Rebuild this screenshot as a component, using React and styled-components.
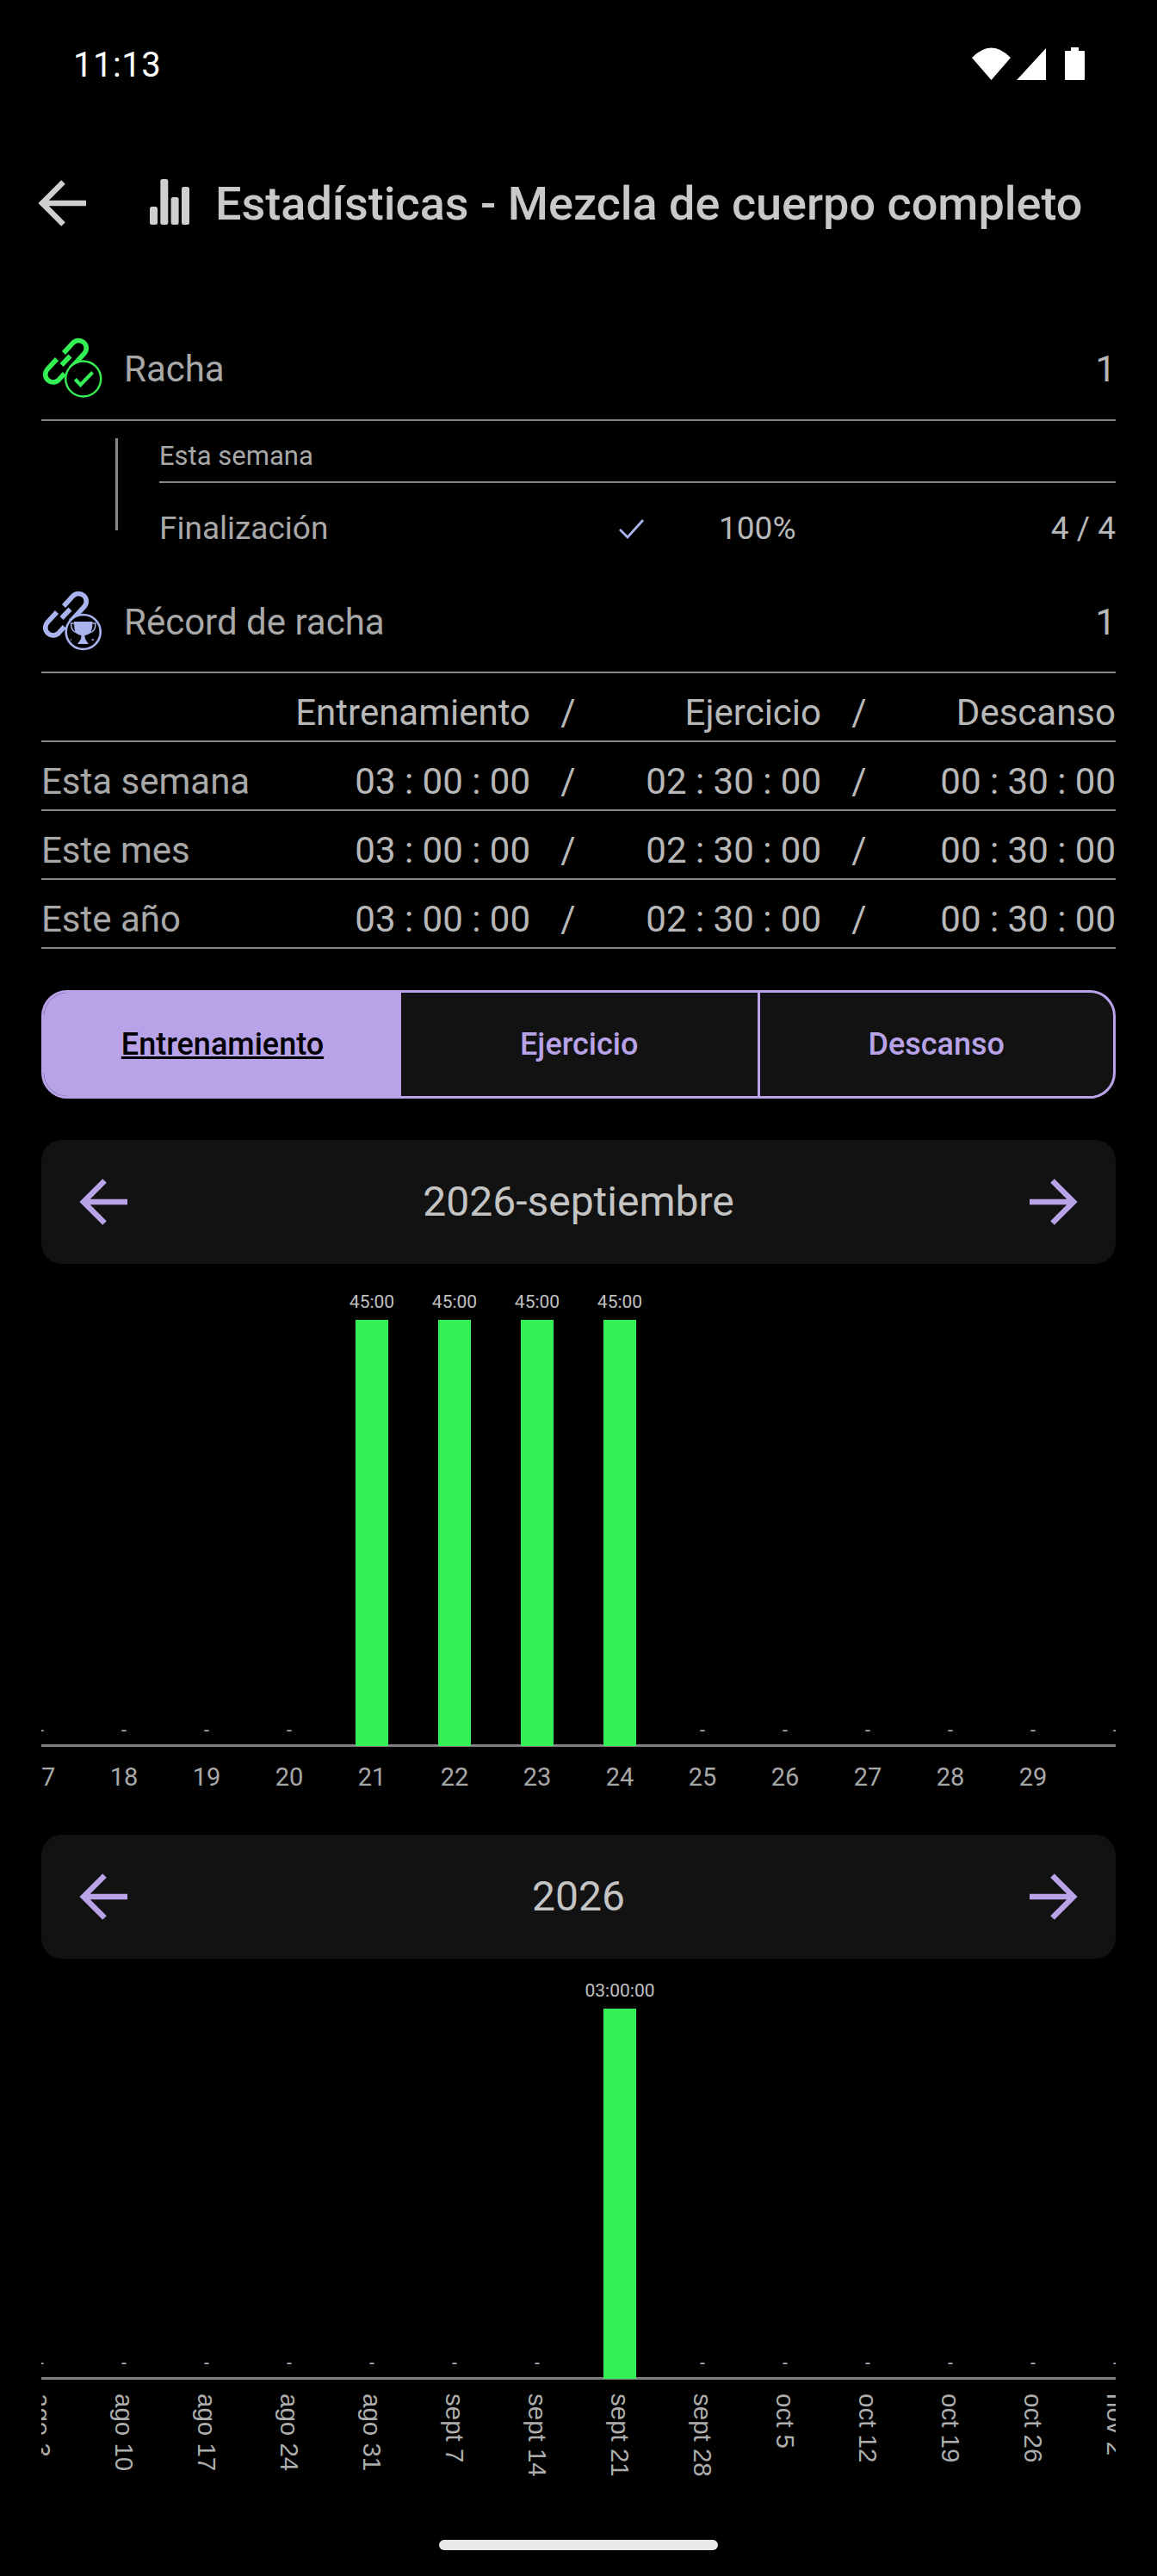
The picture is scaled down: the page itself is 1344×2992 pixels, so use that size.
import React from "react";
import styled, { createGlobalStyle } from "styled-components";

const Global = createGlobalStyle`
  html, body { margin: 0; padding: 0; background: #000; }
  body { font-family: Roboto, "Noto Sans", sans-serif; }
`;

const Page = styled.div`
  width: 1344px; height: 2992px; background: #000; overflow: hidden;
  display: flex; flex-direction: column; color: #bdbdbd;
`;
const StatusBar = styled.div`
  height: 148px; padding: 52px 84px 0 85px; box-sizing: border-box;
  display: flex; justify-content: space-between; align-items: flex-start;
`;
const Time = styled.span`font-size: 40px; line-height: 47px; color: #fff; letter-spacing: 0.5px;`;
const StatusIcons = styled.svg`width: 131px; height: 40px; display: block; margin-top: 2px;`;
const Header = styled.header`
  height: 176px; padding: 59px 0 0 44px; box-sizing: border-box;
  display: flex; align-items: flex-start;
`;
const Arrow = styled.svg`width: 57px; height: 58px; flex: none; display: block;`;
const TitleIcon = styled.svg`width: 46px; height: 54px; flex: none; margin-left: 73px; display: block;`;
const Title = styled.h1`
  margin: 0 0 0 30px; font-size: 54px; line-height: 60px; font-weight: 500;
  color: #c9c9c9; white-space: nowrap;
`;
const Content = styled.main`padding: 0 48px; display: flex; flex-direction: column;`;
const StatRow = styled.div`
  height: ${(p) => p.$h}px; box-sizing: border-box; border-bottom: 2px solid #888;
  display: flex; justify-content: space-between; align-items: flex-start; padding-top: ${(p) => p.$pt}px;
`;
const RowLabel = styled.div`display: flex; align-items: flex-start; font-size: 42px; line-height: 50px; font-weight: 400; color: #a8a8a8;`;
const LinkIcon = styled.svg`width: 72px; height: 72px; flex: none; margin: -12px 24px 0 0; display: block;`;
const RowValue = styled.span`font-size: 42px; line-height: 50px; font-weight: 400; color: #b8b8b8;`;
const Streak = styled.section`display: flex; padding: 20px 0 0 86px; height: 172px; box-sizing: border-box;`;
const Rule = styled.div`width: 3px; height: 107px; background: #888; flex: none; margin-right: 48px;`;
const StreakBody = styled.div`flex: 1; min-width: 0;`;
const WeekHead = styled.div`
  height: 52px; box-sizing: border-box; font-size: 31px; line-height: 38px; font-weight: 400; padding-top: 2px;
  border-bottom: 2px solid #888; color: #a8a8a8;
`;
const CompletionRow = styled.div`
  display: grid; grid-template-columns: 534px 116px 1fr auto; margin-top: 31px;
  font-size: 37px; line-height: 44px; font-weight: 400; color: #a8a8a8; align-items: center;
`;
const CheckMark = styled.svg`width: 30px; height: 24px; display: block;`;
const Percent = styled.span`color: #b8b8b8;`;
const Count = styled.span`color: #b8b8b8;`;
const TableRow = styled.div`
  height: 80px; box-sizing: border-box; border-bottom: 2px solid #888;
  display: grid; grid-template-columns: 568px 88px 250px 88px 1fr; align-items: center;
  font-size: 42px; font-weight: 400; color: #b8b8b8; padding-top: 14px;
`;
const Cell = styled.div`
  display: flex; justify-content: ${(p) => (p.$between ? "space-between" : "flex-end")};
  line-height: 50px; white-space: nowrap;
`;
const RowName = styled.span`color: #a8a8a8;`;
const Slash = styled.span`text-align: center; line-height: 50px;`;
const Tabs = styled.div`
  margin-top: 48px; height: 126px; box-sizing: border-box; border: 3px solid #b8a2e8; border-radius: 30px;
  display: grid; grid-template-columns: 415px 1fr 1fr; overflow: hidden; background: #121212;
`;
const Tab = styled.div`
  display: flex; align-items: center; justify-content: center; font-size: 36px; font-weight: 500;
  color: ${(p) => (p.$active ? "#000" : "#b8a2e8")};
  background: ${(p) => (p.$active ? "#b8a2e8" : "transparent")};
  text-decoration: ${(p) => (p.$active ? "underline" : "none")};
  border-left: ${(p) => (p.$divider ? "3px solid #b8a2e8" : "none")};
`;
const Pager = styled.div`
  margin-top: ${(p) => p.$mt}px; height: 144px; background: #121212; border-radius: 24px; padding: 0 44px;
  display: flex; align-items: center; justify-content: space-between; flex: none;
`;
const PagerText = styled.span`font-size: 48px; line-height: 56px; font-weight: 400; color: #c4c4c4;`;
const ChartView = styled.div`overflow: hidden; height: ${(p) => p.$h}px; margin-top: ${(p) => p.$mt}px;`;
const Columns = styled.div`
  width: 1344px; margin-left: -48px; height: 100%;
  display: grid; grid-template-columns: repeat(14, 96px);
`;
const Column = styled.div`display: flex; flex-direction: column; align-items: center; min-width: 0;`;
const Plot = styled.div`
  width: 100%; height: ${(p) => p.$h}px; box-sizing: border-box; flex: none; border-bottom: 3px solid #808080;
  display: flex; flex-direction: column; justify-content: flex-end; align-items: center;
`;
const ValueLabel = styled.span`
  font-size: 21px; line-height: 24px; font-weight: 400; color: #c0c0c0; white-space: nowrap;
  margin-bottom: ${(p) => p.$mb}px;
`;
const Bar = styled.div`width: 38px; height: ${(p) => p.$h}px; background: #33f155; margin-bottom: -2px; flex: none;`;
const Tick = styled.span`
  font-size: 29px; line-height: 34px; font-weight: 400; color: #a8a8a8; margin-top: 18px; white-space: nowrap;
`;
const VerticalTick = styled.span`
  writing-mode: vertical-rl; font-family: "Liberation Sans", Arial, sans-serif; font-size: 29.5px; line-height: 34px;
  color: #adadad; margin-top: 16px; white-space: nowrap;
`;
const HomeBar = styled.div`
  width: 324px; height: 12px; border-radius: 6px; background: #e8e8e8; flex: none; margin: ${(p) => p.$mt}px auto 0;
`;

const ArrowGlyph = ({ dir = "left", color }) => (
  <Arrow viewBox="0 0 57 58" fill="none" stroke={color} strokeWidth="6.5">
    {dir === "left" ? (
      <path d="M29.5 4.5 L5 29 L29.5 53.5 M5 29 H56" />
    ) : (
      <path d="M27.5 4.5 L52 29 L27.5 53.5 M52 29 H1" />
    )}
  </Arrow>
);

const chain = (
  <>
    <path d="M44 30 L54.8 18.2 A9 9 0 0 1 68.2 30.2 L52 48" />
    <path d="M41.5 44 L51.5 33.5" />
    <path d="M36 37 L24.8 49.2 A9 9 0 0 0 38.2 61.2 L44.9 53.8" />
  </>
);

const StreakIcon = () => (
  <LinkIcon viewBox="18 12 72 72" fill="none" stroke="#33f155" strokeWidth="5.6" strokeLinecap="butt">
    {chain}
    <circle cx="66.7" cy="60" r="20.5" fill="#000" strokeWidth="2.4" />
    <path d="M57.3 60.5 L63.5 67 L77.5 52.5" strokeWidth="4" />
  </LinkIcon>
);

const RecordIcon = () => (
  <LinkIcon viewBox="18 12 72 72" fill="none" stroke="#a9b4ee" strokeWidth="5.6" strokeLinecap="butt">
    {chain}
    <circle cx="66.7" cy="60" r="20" fill="#000" strokeWidth="2.6" />
    <path d="M56 48 h21.5 c0 7 -1 12 -4.5 14.5 c-1.5 1 -3 1 -4.5 1.5 c-.2 4 1.5 6 4.5 10 h-13 c3 -4 4.7 -6 4.5 -10 c-1.5 -.5 -3 -.5 -4.5 -1.5 c-3.5 -2.5 -4 -7.5 -4 -14.5 z" fill="#a9b4ee" stroke="none" />
    <path d="M56 50 h-3.5 c0 6 2 10 7 11 M77.5 50 h3.5 c0 6 -2 10 -7 11" strokeWidth="1.4" />
    <path d="M51 45.5 h2 M76.5 69 h2.4 M52 69 h1" strokeWidth="1.4" />
  </LinkIcon>
);

const StatusGlyphs = () => (
  <StatusIcons viewBox="0 0 131 40" fill="#fff">
    <path d="M0 13 Q22.5 -10 45 13 L22.5 39 Z" />
    <path d="M52 39 L86 2 V39 Z" />
    <path d="M109 5 H115 V1 H124 V5 H130 Q131 5 131 6 V38 Q131 39 130 39 H109 Q108 39 108 38 V6 Q108 5 109 5 Z" />
  </StatusIcons>
);

const BarsIcon = () => (
  <TitleIcon viewBox="0 0 46 54" fill="#cfcfcf">
    <rect x="0" y="33" width="9" height="21" rx="2.5" />
    <rect x="12.3" y="1" width="9" height="53" rx="2.5" />
    <rect x="24.6" y="22" width="9" height="32" rx="2.5" />
    <rect x="37" y="10" width="9" height="44" rx="2.5" />
  </TitleIcon>
);

const tableRows = [
  ["Esta semana", "03 : 00 : 00", "02 : 30 : 00", "00 : 30 : 00"],
  ["Este mes", "03 : 00 : 00", "02 : 30 : 00", "00 : 30 : 00"],
  ["Este año", "03 : 00 : 00", "02 : 30 : 00", "00 : 30 : 00"],
];

const monthTicks = ["17","18","19","20","21","22","23","24","25","26","27","28","29",""];
const monthBars = { 21: 1, 22: 1, 23: 1, 24: 1 };
const yearTicks = ["ago 3","ago 10","ago 17","ago 24","ago 31","sept 7","sept 14","sept 21","sept 28","oct 5","oct 12","oct 19","oct 26","nov 2"];

export default function App() {
  return (
    <Page>
      <Global />
      <StatusBar>
        <Time>11:13</Time>
        <StatusGlyphs />
      </StatusBar>
      <Header>
        <ArrowGlyph color="#cfcfcf" />
        <BarsIcon />
        <Title>Estadísticas - Mezcla de cuerpo completo</Title>
      </Header>
      <Content>
        <StatRow $h={165} $pt={80}>
          <RowLabel><StreakIcon />Racha</RowLabel>
          <RowValue>1</RowValue>
        </StatRow>
        <Streak>
          <Rule />
          <StreakBody>
            <WeekHead>Esta semana</WeekHead>
            <CompletionRow>
              <span>Finalización</span>
              <CheckMark viewBox="0 0 30 24" fill="none" stroke="#a9b4ee" strokeWidth="2.8"><path d="M1 13 L10 22 L28 2" /></CheckMark>
              <Percent>100%</Percent>
              <Count>4 / 4</Count>
            </CompletionRow>
          </StreakBody>
        </Streak>
        <StatRow $h={121} $pt={37}>
          <RowLabel><RecordIcon />Récord de racha</RowLabel>
          <RowValue>1</RowValue>
        </StatRow>
        <TableRow>
          <Cell>Entrenamiento</Cell><Slash>/</Slash><Cell>Ejercicio</Cell><Slash>/</Slash><Cell>Descanso</Cell>
        </TableRow>
        {tableRows.map((r) => (
          <TableRow key={r[0]}>
            <Cell $between><RowName>{r[0]}</RowName>{r[1]}</Cell><Slash>/</Slash><Cell>{r[2]}</Cell><Slash>/</Slash><Cell>{r[3]}</Cell>
          </TableRow>
        ))}
        <Tabs>
          <Tab $active>Entrenamiento</Tab>
          <Tab>Ejercicio</Tab>
          <Tab $divider>Descanso</Tab>
        </Tabs>
        <Pager $mt={48}>
          <ArrowGlyph color="#b8a2e8" />
          <PagerText>2026-septiembre</PagerText>
          <ArrowGlyph dir="right" color="#b8a2e8" />
        </Pager>
        <ChartView $h={607} $mt={29}>
          <Columns>
            {monthTicks.map((t, i) => (
              <Column key={i}>
                <Plot $h={532}>
                  {monthBars[t] ? (
                    <><ValueLabel $mb={9}>45:00</ValueLabel><Bar $h={495} /></>
                  ) : (
                    <ValueLabel $mb={5}>-</ValueLabel>
                  )}
                </Plot>
                {t && <Tick>{t}</Tick>}
              </Column>
            ))}
          </Columns>
        </ChartView>
        <Pager $mt={27}>
          <ArrowGlyph color="#b8a2e8" />
          <PagerText>2026</PagerText>
          <ArrowGlyph dir="right" color="#b8a2e8" />
        </Pager>
        <ChartView $h={620} $mt={27}>
          <Columns>
            {yearTicks.map((t) => (
              <Column key={t}>
                <Plot $h={462}>
                  {t === "sept 21" ? (
                    <><ValueLabel $mb={9}>03:00:00</ValueLabel><Bar $h={430} /></>
                  ) : (
                    <ValueLabel $mb={5}>-</ValueLabel>
                  )}
                </Plot>
                <VerticalTick>{t}</VerticalTick>
              </Column>
            ))}
          </Columns>
        </ChartView>
      </Content>
      <HomeBar $mt={28} />
    </Page>
  );
}
